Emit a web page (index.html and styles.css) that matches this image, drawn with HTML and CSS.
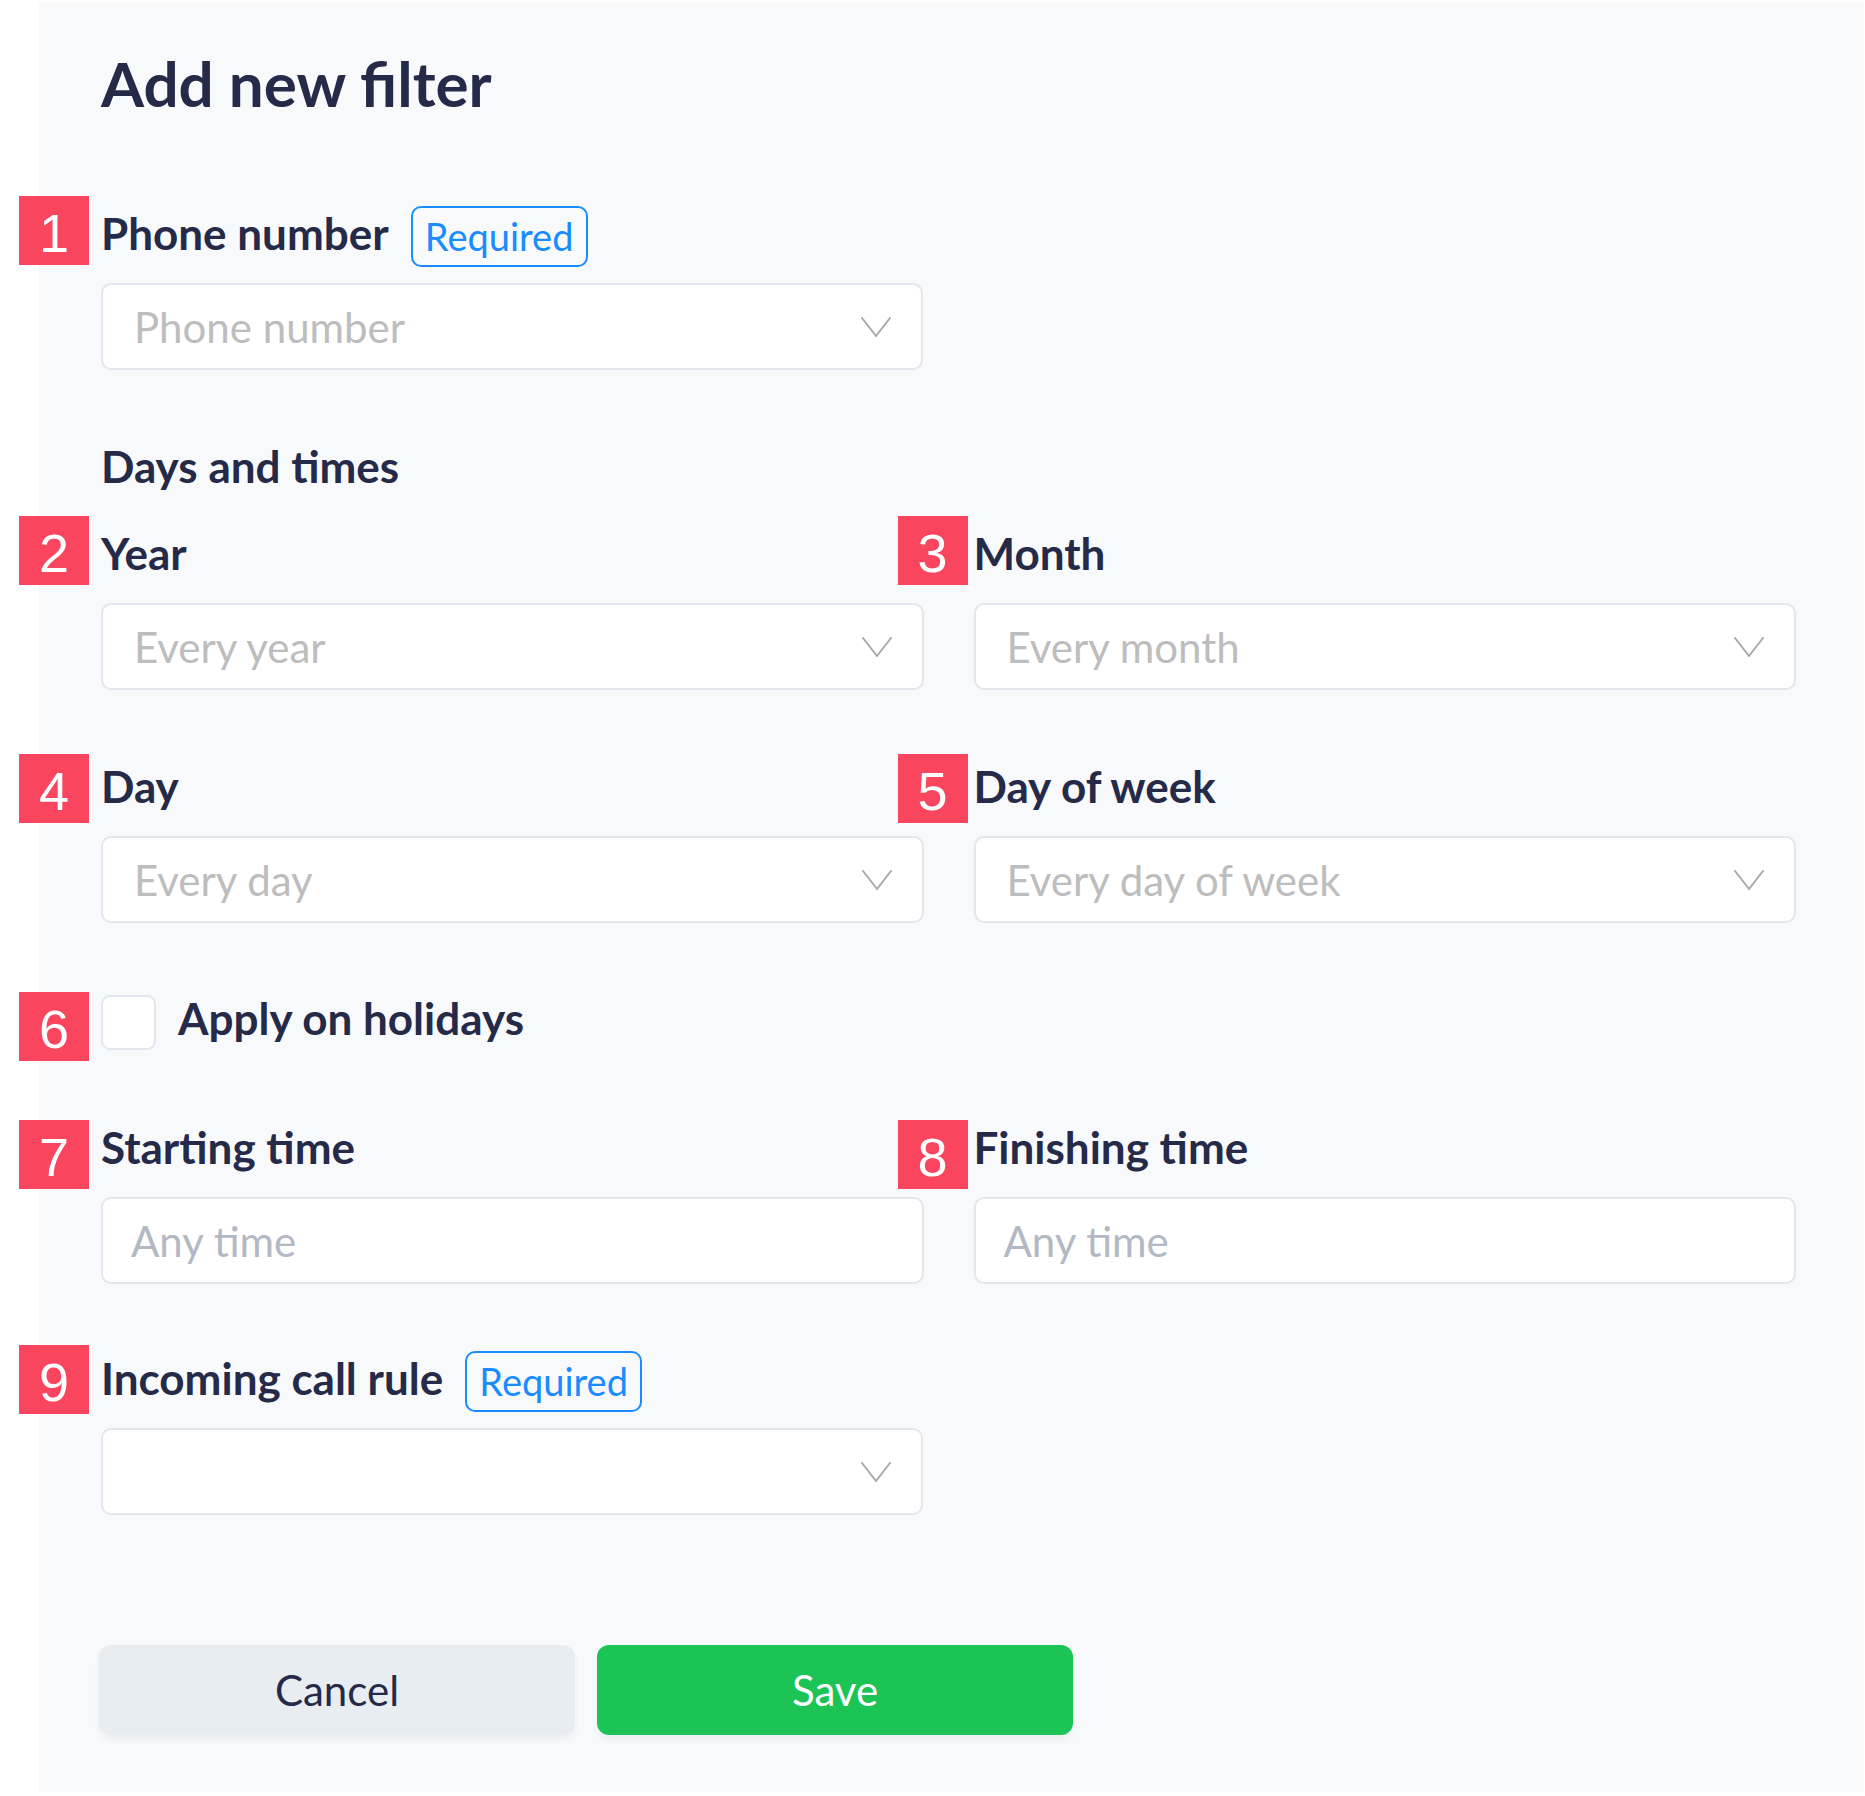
FILE: index.html
```html
<!DOCTYPE html>
<html lang="en">
<head>
<meta charset="utf-8">
<title>Add new filter</title>
<link rel="stylesheet" href="styles.css">
</head>
<body>
<div class="panel">
  <h1 class="title">Add new filter</h1>

  <div class="field field-single field-phone">
    <span class="marker marker-left m-top-10">1</span>
    <div class="label-row">
      <span class="label">Phone number</span>
      <span class="required">Required</span>
    </div>
    <div class="select">
      <span class="placeholder">Phone number</span>
      <svg class="chevron" viewBox="0 0 30 20" width="30" height="20"><polyline points="1,1 15,19 29,1"/></svg>
    </div>
  </div>

  <div class="section-title">Days and times</div>

  <div class="grid grid-dates">
    <div class="field">
      <span class="marker marker-left m-top-10">2</span>
      <div class="label-row"><span class="label">Year</span></div>
      <div class="select">
        <span class="placeholder">Every year</span>
        <svg class="chevron" viewBox="0 0 30 20" width="30" height="20"><polyline points="1,1 15,19 29,1"/></svg>
      </div>
    </div>
    <div class="field">
      <span class="marker marker-right m-top-10">3</span>
      <div class="label-row"><span class="label">Month</span></div>
      <div class="select">
        <span class="placeholder">Every month</span>
        <svg class="chevron" viewBox="0 0 30 20" width="30" height="20"><polyline points="1,1 15,19 29,1"/></svg>
      </div>
    </div>
    <div class="field">
      <span class="marker marker-left m-top-5">4</span>
      <div class="label-row"><span class="label">Day</span></div>
      <div class="select">
        <span class="placeholder">Every day</span>
        <svg class="chevron" viewBox="0 0 30 20" width="30" height="20"><polyline points="1,1 15,19 29,1"/></svg>
      </div>
    </div>
    <div class="field">
      <span class="marker marker-right m-top-5">5</span>
      <div class="label-row"><span class="label">Day of week</span></div>
      <div class="select">
        <span class="placeholder">Every day of week</span>
        <svg class="chevron" viewBox="0 0 30 20" width="30" height="20"><polyline points="1,1 15,19 29,1"/></svg>
      </div>
    </div>
  </div>

  <div class="check-row">
    <span class="marker marker-left m-top-3">6</span>
    <span class="checkbox"></span>
    <span class="check-label">Apply on holidays</span>
  </div>

  <div class="grid grid-times">
    <div class="field">
      <span class="marker marker-left m-top-0">7</span>
      <div class="label-row"><span class="label">Starting time</span></div>
      <div class="input"><span class="placeholder-time">Any time</span></div>
    </div>
    <div class="field">
      <span class="marker marker-right m-top-0">8</span>
      <div class="label-row"><span class="label">Finishing time</span></div>
      <div class="input"><span class="placeholder-time">Any time</span></div>
    </div>
  </div>

  <div class="field field-single field-rule">
    <span class="marker marker-left m-top-6">9</span>
    <div class="label-row">
      <span class="label">Incoming call rule</span>
      <span class="required">Required</span>
    </div>
    <div class="select">
      <span class="placeholder"></span>
      <svg class="chevron" viewBox="0 0 30 20" width="30" height="20"><polyline points="1,1 15,19 29,1"/></svg>
    </div>
  </div>

  <div class="actions">
    <button class="btn btn-cancel" type="button">Cancel</button>
    <button class="btn btn-save" type="button">Save</button>
  </div>
</div>
</body>
</html>
```

FILE: styles.css
```css
* { box-sizing: border-box; }

html, body {
  margin: 0;
  padding: 0;
  background: #ffffff;
}

body {
  font-family: "Lato", "Noto Sans", sans-serif;
  color: #262a49;
}

.panel {
  margin: 3px 0 0 39px;
  width: 1825px;
  background: #f8f9fb;
  padding: 44px 68px 57px 62px;
}

.title {
  margin: 0;
  font-size: 62px;
  line-height: 72px;
  font-weight: 700;
  color: #262a49;
}

.field {
  position: relative;
}

.field-single {
  width: 822px;
}

.field-phone { margin-top: 87px; }
.field-rule { margin-top: 67px; }

.label-row {
  display: flex;
  align-items: flex-start;
  height: 61px;
  margin-bottom: 16px;
}

.label {
  font-size: 44px;
  line-height: 54px;
  font-weight: 700;
  color: #262a49;
  white-space: nowrap;
}

.required {
  margin-left: 22px;
  width: 177px;
  height: 61px;
  border: 2px solid #1a8cff;
  border-radius: 10px;
  color: #1a8cff;
  font-size: 38px;
  line-height: 57px;
  text-align: center;
  font-weight: 400;
}

.marker {
  position: absolute;
  width: 70px;
  height: 69px;
  background: #f9465e;
  color: #ffffff;
  font-family: "Liberation Sans", Arial, sans-serif;
  font-size: 54px;
  line-height: 75px;
  text-align: center;
  overflow: hidden;
  z-index: 2;
}

.marker-left { left: -82px; }
.marker-right { left: -76px; }
.m-top-10 { top: -10px; }
.m-top-6 { top: -6px; }
.m-top-5 { top: -5px; }
.m-top-3 { top: -3px; }
.m-top-0 { top: 0; }

.select,
.input {
  height: 87px;
  background: #ffffff;
  border: 2px solid #e3e6ec;
  border-radius: 10px;
  display: flex;
  align-items: center;
  justify-content: space-between;
}

.select {
  padding: 0 30px 0 31px;
}

.input {
  padding: 0 28px;
}

.placeholder {
  font-size: 42px;
  color: #bdbdbd;
  white-space: nowrap;
}

.placeholder-time {
  font-size: 42px;
  color: #b3b9c4;
  white-space: nowrap;
}

.chevron {
  flex: none;
  fill: none;
  stroke: #a9a9a9;
  stroke-width: 2;
  stroke-linecap: round;
  stroke-linejoin: round;
}

.section-title {
  margin-top: 69px;
  font-size: 44px;
  line-height: 54px;
  font-weight: 700;
  color: #262a49;
}

.grid {
  display: grid;
  grid-template-columns: 1fr 1fr;
  column-gap: 50px;
}

.grid-dates {
  margin-top: 33px;
  row-gap: 69px;
}

.grid-times {
  margin-top: 70px;
}

.check-row {
  position: relative;
  margin-top: 72px;
  display: flex;
  align-items: flex-start;
  height: 55px;
}

.checkbox {
  width: 55px;
  height: 55px;
  background: #ffffff;
  border: 2px solid #e3e6ec;
  border-radius: 9px;
  flex: none;
}

.check-label {
  margin-left: 22px;
  font-size: 44px;
  line-height: 47px;
  font-weight: 700;
  color: #262a49;
}

.actions {
  margin-top: 130px;
  display: flex;
  gap: 22px;
  margin-left: -2px;
}

.btn {
  width: 476px;
  height: 90px;
  border: none;
  border-radius: 12px;
  font-family: "Lato", "Noto Sans", sans-serif;
  font-size: 42px;
  font-weight: 400;
  box-shadow: 0 5px 6px rgba(40, 50, 80, 0.05);
  padding: 0;
}

.btn-cancel {
  background: #e8edf2;
  color: #262a49;
}

.btn-save {
  background: #1bc455;
  color: #ffffff;
}
```
